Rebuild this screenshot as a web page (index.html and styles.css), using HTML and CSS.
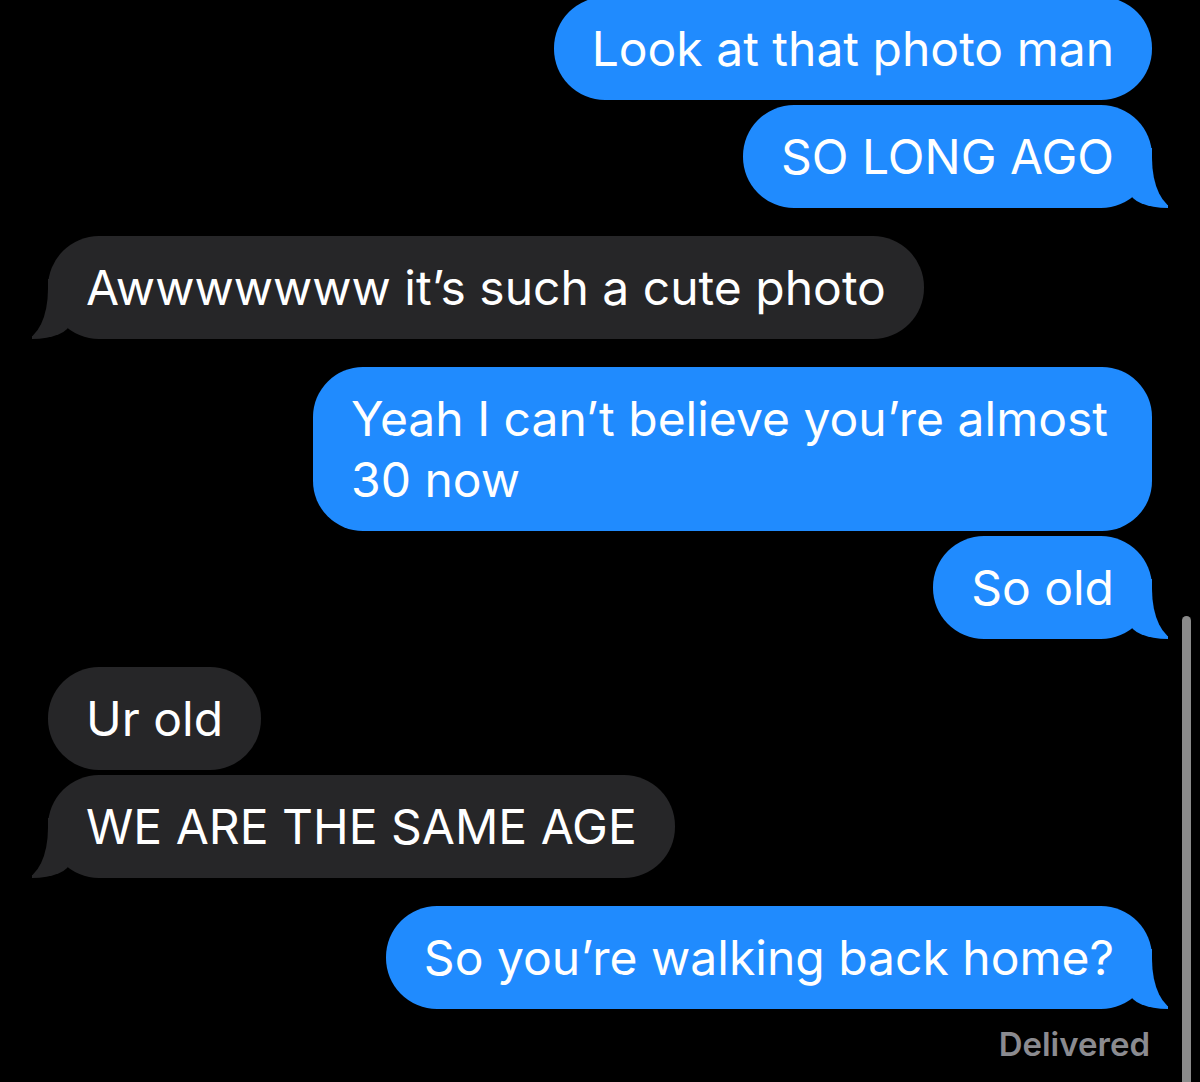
FILE: index.html
```html
<!DOCTYPE html>
<html lang="en">
<head>
<meta charset="utf-8">
<title>Messages</title>
<link rel="stylesheet" href="styles.css">
</head>
<body>
<main class="thread">
  <div class="msg me first">Look at that photo man</div>
  <div class="msg me tail same">SO LONG AGO</div>
  <div class="msg them tail group">Awwwwwww it’s such a cute photo</div>
  <div class="msg me wide group">Yeah I can’t believe you’re almost 30 now</div>
  <div class="msg me tail same">So old</div>
  <div class="msg them group">Ur old</div>
  <div class="msg them tail same">WE ARE THE SAME AGE</div>
  <div class="msg me tail group">So you’re walking back home?</div>
  <div class="status">Delivered</div>
</main>
<div class="scrollbar"></div>
</body>
</html>
```
FILE: styles.css
```css
html, body {
  margin: 0;
  padding: 0;
  background: #000;
  height: 100%;
  overflow: hidden;
}

body {
  font-family: "Inter", "Noto Sans", sans-serif;
  color: #fff;
  position: relative;
}

.thread {
  display: flex;
  flex-direction: column;
  padding: 0 48px;
}

.msg {
  position: relative;
  font-size: 48px;
  line-height: 61px;
  padding: 21px 38px;
  border-radius: 51px;
  white-space: nowrap;
}

.msg.first { margin-top: -3px; }
.msg.same { margin-top: 5px; }
.msg.group { margin-top: 28px; }

.msg.me {
  align-self: flex-end;
  background: #208bfe;
}

.msg.them {
  align-self: flex-start;
  background: #262628;
}

.msg.wide {
  width: 763px;
  white-space: normal;
  border-radius: 50px;
}

/* tails */
.msg.tail::before,
.msg.tail::after {
  content: "";
  position: absolute;
  bottom: 0;
}

.msg.me.tail::before {
  right: -16px;
  width: 38px;
  height: 60px;
  background: #208bfe;
  border-bottom-left-radius: 38px 16px;
}

.msg.me.tail::after {
  right: -40px;
  width: 40px;
  height: 62px;
  background: #000;
  border-bottom-left-radius: 24px 50px;
}

.msg.them.tail::before {
  left: -16px;
  width: 38px;
  height: 60px;
  background: #262628;
  border-bottom-right-radius: 38px 16px;
}

.msg.them.tail::after {
  left: -40px;
  width: 40px;
  height: 62px;
  background: #000;
  border-bottom-right-radius: 24px 50px;
}

.status {
  align-self: flex-end;
  margin-top: 16px;
  margin-right: 2px;
  font-size: 33px;
  line-height: 38px;
  font-weight: 600;
  color: #8b8b90;
}

.scrollbar {
  position: absolute;
  left: 1182px;
  top: 616px;
  width: 9px;
  height: 480px;
  border-radius: 5px;
  background: #8a8a8a;
}
```
